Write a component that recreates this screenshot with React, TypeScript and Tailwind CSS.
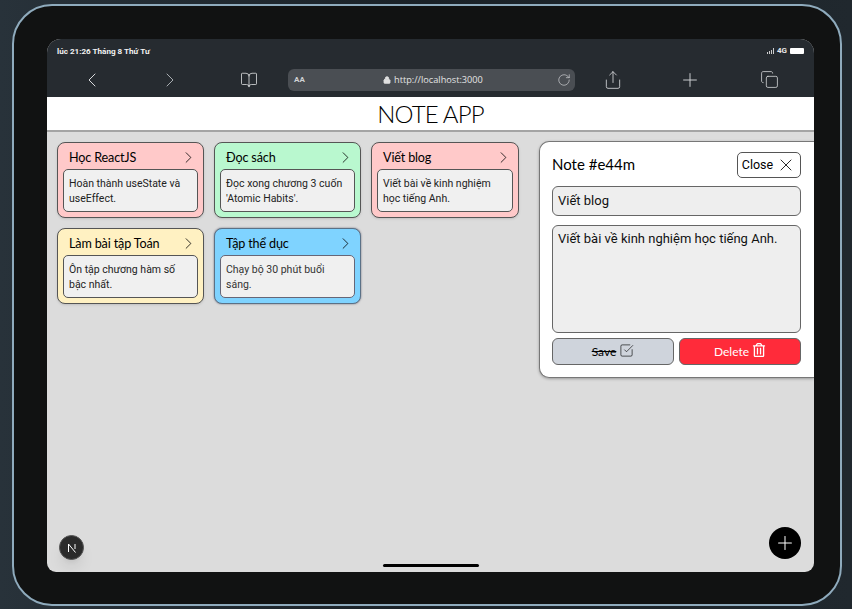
import React from 'react';
import { BookOpen, ChevronLeft, ChevronRight, Copy, Lock, Plus, RotateCw, Share, SquareCheckBig, X } from 'lucide-react';
import { FaRegTrashAlt } from 'react-icons/fa';

const notes = [
  { title: 'Học ReactJS', body: 'Hoàn thành useState và useEffect.', color: 'bg-[#ffc9c9]' },
  { title: 'Đọc sách', body: "Đọc xong chương 3 cuốn 'Atomic Habits'.", color: 'bg-[#b9f8cf]' },
  { title: 'Viết blog', body: 'Viết bài về kinh nghiệm học tiếng Anh.', color: 'bg-[#ffc9c9]' },
  { title: 'Làm bài tập Toán', body: 'Ôn tập chương hàm số bậc nhất.', color: 'bg-[#fff1c2]' },
  { title: 'Tập thể dục', body: 'Chạy bộ 30 phút buổi sáng.', color: 'bg-[#7fd3ff]', hover: true },
];

function NoteCard({ note }: { note: (typeof notes)[number] }) {
  return (
    <div
      className={`h-full rounded-lg border px-[5px] pb-[5px] flex flex-col ${note.color} ${
        note.hover ? 'border-[#5b7186] shadow-[0_0_2px_#667]' : 'border-[#555] shadow-sm'
      }`}
    >
      <div className="h-[26px] pt-[4px] flex items-center justify-between pl-[6px] shrink-0">
        <span className="font-['Lato',sans-serif] text-[12.6px] tracking-[-0.15px] text-black leading-none">{note.title}</span>
        <ChevronRight size={19} strokeWidth={1} className="text-black -mt-[2px]" />
      </div>
      <div
        className={`flex-1 rounded-[5px] border bg-[#f0f0f0] px-[5px] pt-[6px] font-['Roboto',sans-serif] text-[10.5px] leading-[15px] ${
          note.hover ? 'border-[#667] text-[#333]' : 'border-[#555] text-[#222]'
        }`}
      >
        {note.body}
      </div>
    </div>
  );
}

export default function App() {
  return (
    <div className="w-[852px] h-[609px] overflow-hidden bg-gradient-to-r from-[#28323a] via-[#1a2127] to-[#20282e] pt-[4px] pl-[12px]">
      <div className="w-[830px] h-[602px] rounded-[40px] border-2 border-[#8fabbd] bg-[#111212] pl-[33px] pt-[33px]">
        <div className="relative w-[767px] h-[533px] rounded-t-[14px] rounded-b-[9px] overflow-hidden bg-[#dcdcdc] flex flex-col font-['Roboto',sans-serif]">
          <div className="h-[58px] bg-[#262b30] flex flex-col shrink-0">
            <div className="h-[23px] flex items-end justify-between pl-[10px] pr-[10px] pb-[5px]">
              <span className="text-[8.1px] font-bold text-[#f2f2f2] leading-[12px]">lúc 21:26 Tháng 8 Thứ Tư</span>
              <div className="flex items-center gap-[3px]">
                <div className="flex items-end gap-[1px] h-[6px]">
                  <span className="w-[1px] h-[2px] bg-[#ccc]" />
                  <span className="w-[1px] h-[3px] bg-[#ccc]" />
                  <span className="w-[1px] h-[4px] bg-[#ccc]" />
                  <span className="w-[1px] h-[6px] bg-[#ccc]" />
                </div>
                <span className="text-[8px] font-bold text-[#e8e8e8] leading-[12px]">4G</span>
                <span className="w-[14px] h-[6px] rounded-[1px] bg-white" />
              </div>
            </div>
            <div className="flex-1 flex items-center text-[#d8dadc]">
              <div className="w-[241px] flex items-center">
                <ChevronLeft size={24} strokeWidth={1} className="ml-[33px]" />
                <ChevronRight size={24} strokeWidth={1} className="ml-[54px] text-[#a8adb1]" />
                <BookOpen size={18} strokeWidth={1.1} className="ml-[58px]" />
              </div>
              <div className="w-[287px] h-[22px] rounded-[6px] bg-[#4a4e53] flex items-center pl-[6px] pr-[4px]">
                <span className="text-[8px] font-bold text-[#d0d2d4] w-[89px]">AA</span>
                <Lock size={8} strokeWidth={2.5} className="text-[#e0e0e0] fill-[#e0e0e0]" />
                <span className="ml-[3px] text-[9.2px] text-[#e4e4e4] font-['Open_Sans',sans-serif]">http://localhost:3000</span>
                <RotateCw size={14} strokeWidth={1.1} className="ml-auto" />
              </div>
              <Share size={20} strokeWidth={1} className="ml-[28px]" />
              <Plus size={22} strokeWidth={1} className="ml-[56px]" />
              <Copy size={19} strokeWidth={1} className="ml-[59px]" />
            </div>
          </div>

          <header className="h-[35px] shrink-0 bg-white border-b-2 border-[#a4a4a4] flex items-center justify-center">
            <h1 className="font-['Lato',sans-serif] text-[24px] tracking-[-0.8px] font-light text-black leading-none">NOTE APP</h1>
          </header>

          <main className="flex-1 flex justify-between pt-[10px]">
            <div className="pl-[10px] grid grid-cols-[147px_147px_148px] auto-rows-[76px] gap-x-[10px] gap-y-[10px] h-fit">
              {notes.map(n => (
                <NoteCard key={n.title} note={n} />
              ))}
            </div>

            <section className="w-[275px] h-[237px] -mt-[1px] rounded-l-[10px] border border-r-0 border-[#777] bg-white shadow-[0_1px_3px_rgba(0,0,0,0.3)] pl-[12px] pr-[13px] pt-[9px]">
              <div className="h-[27px] flex items-center justify-between">
                <span className="font-['Lato',sans-serif] text-[15px] text-black leading-none">Note #e44m</span>
                <button className="w-[64px] h-[26px] rounded-[5px] border border-[#555] bg-white flex items-center justify-center gap-[3px] text-[12.5px] text-black">
                  <span className="pt-[2px]">Close</span> <X size={20} strokeWidth={1} />
                </button>
              </div>
              <div className="mt-[8px] h-[30px] rounded-[6px] border border-[#666] bg-[#eeeeee] px-[5px] flex items-center text-[13px] text-[#111]">
                Viết blog
              </div>
              <div className="mt-[9px] h-[108px] rounded-[6px] border border-[#666] bg-[#eeeeee] px-[5px] pt-[3px] text-[13px] leading-[20px] text-[#111]">
                Viết bài về kinh nghiệm học tiếng Anh.
              </div>
              <div className="mt-[5px] grid grid-cols-2 gap-[5px]">
                <button className="h-[27px] rounded-[6px] border border-[#666] bg-[#cfd4dc] flex items-center justify-center gap-[3px] font-['Lato',sans-serif] text-[12px] text-black">
                  <span className="line-through">Save</span>
                  <SquareCheckBig size={15} strokeWidth={1} className="-mt-[3px]" />
                </button>
                <button className="h-[27px] rounded-[6px] border border-[#666] bg-[#ff2b3a] flex items-center justify-center gap-[3px] font-['Lato',sans-serif] text-[12px] text-white">
                  Delete <FaRegTrashAlt size={14} className="-mt-[3px]" />
                </button>
              </div>
            </section>
          </main>

          <div className="absolute left-[12px] bottom-[12px] w-[25px] h-[25px] rounded-full bg-[#2b2b2b] border border-[#555] flex items-center justify-center shadow-lg">
            <svg width="10" height="10" viewBox="0 0 10 10" fill="none" stroke="white" strokeWidth="1">
              <path d="M1.5 1v8M1.5 1l7 8.5M8 1v5" />
            </svg>
          </div>
          <button className="absolute right-[13px] bottom-[13px] w-[32px] h-[32px] rounded-full bg-black flex items-center justify-center text-white">
            <Plus size={22} strokeWidth={1.1} />
          </button>
          <div className="absolute left-[336px] bottom-[5px] w-[96px] h-[3px] rounded-full bg-black" />
        </div>
      </div>
    </div>
  );
}
